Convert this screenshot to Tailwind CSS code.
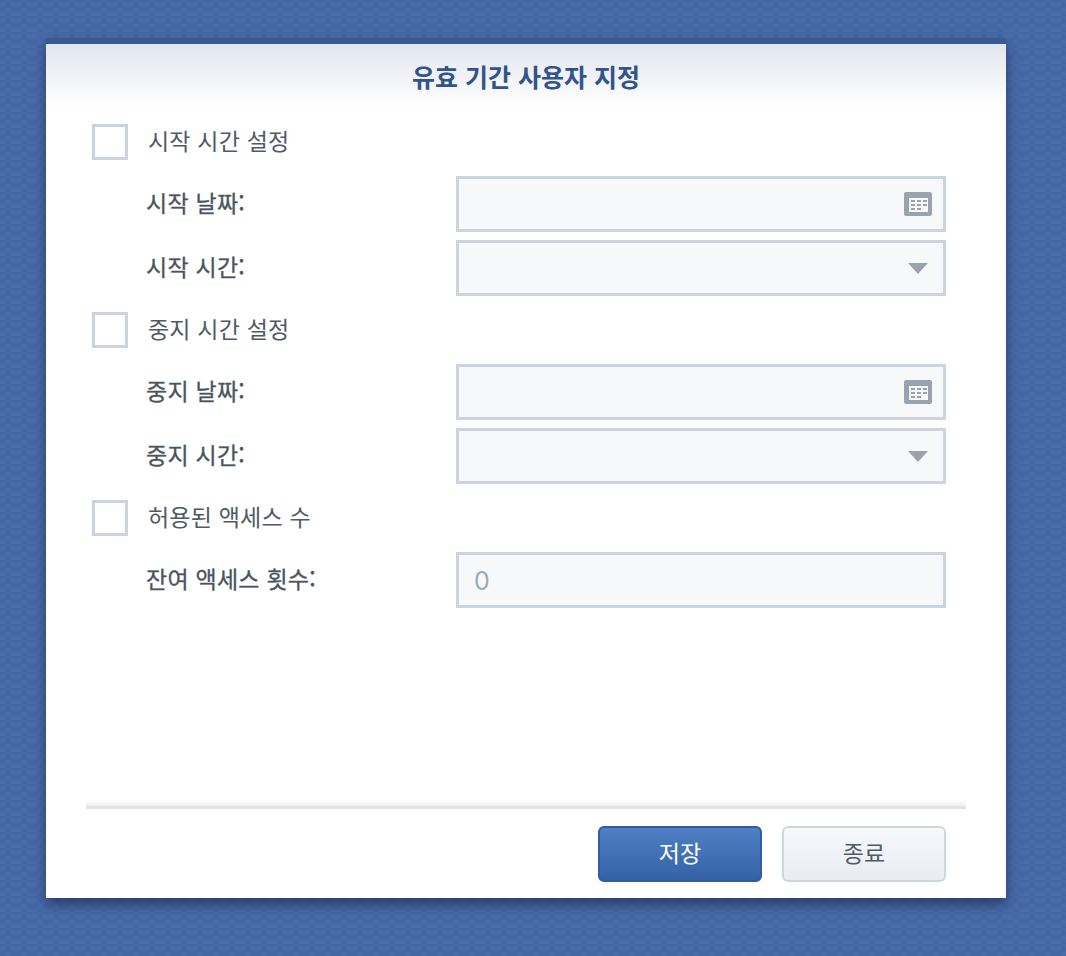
<!DOCTYPE html>
<html lang="ko">
<head>
    <meta charset="UTF-8">
    <title>유효 기간 사용자 지정</title>
    <script src="https://cdn.jsdelivr.net/npm/@tailwindcss/browser@4"></script>
</head>
<body class="h-[956px] overflow-hidden bg-[#4669a8] bg-[length:16px_16px] bg-[image:repeating-linear-gradient(45deg,rgba(255,255,255,0.01)_0_4px,rgba(0,0,0,0.01)_4px_8px),repeating-linear-gradient(-45deg,rgba(255,255,255,0.01)_0_4px,rgba(0,0,0,0.01)_4px_8px)] pt-[38px] pl-[46px] font-['Noto_Sans_CJK_KR','Noto_Sans',sans-serif] text-[23px] text-[#505a64]">

    <!-- Dialog -->
    <div class="flex h-[860px] w-[960px] flex-col border-t-[6px] border-[#395a8e] bg-white shadow-[0_6px_12px_rgba(15,30,60,0.6)]">
        <header class="h-[64px] shrink-0 bg-gradient-to-b from-[#e2e6ee] to-white pt-[14px] text-center text-[25px] leading-[36px] font-bold text-[#32548a]">유효 기간 사용자 지정</header>

        <div class="flex h-[692px] shrink-0 flex-col px-[46px] pt-[16px]">
            <!-- 시작 -->
            <label class="flex h-[36px] items-center">
                <span class="h-[36px] w-[36px] border-[3px] border-[#cbd3de] bg-white"></span>
                <span class="ml-[20px] -translate-y-[2px] leading-[36px] tracking-[0.2px]">시작 시간 설정</span>
            </label>
            <div class="mt-[16px] flex h-[56px] items-center">
                <span class="ml-[54px] w-[310px] -translate-y-[2px] tracking-[0.25px] text-[#4a545e] [-webkit-text-stroke:0.3px]">시작 날짜:</span>
                <div class="flex h-[56px] w-[490px] items-center justify-end border-[3px] border-[#cbd3de] bg-[#f6f8fa] pr-[11px]">
                    <svg width="28" height="24" viewBox="0 0 28 24"><rect width="28" height="24" rx="2" fill="#9aa3ad"/><rect x="5" y="6" width="19" height="14" fill="#f6f8fa"/><path d="M7 9h4M13 9h4M19 9h4M7 13h4M13 13h4M19 13h4M7 17h4M13 17h4" stroke="#9aa3ad" stroke-width="2"/></svg>
                </div>
            </div>
            <div class="mt-[8px] flex h-[56px] items-center">
                <span class="ml-[54px] w-[310px] -translate-y-[2px] tracking-[0.25px] text-[#4a545e] [-webkit-text-stroke:0.3px]">시작 시간:</span>
                <div class="flex h-[56px] w-[490px] items-center justify-end border-[3px] border-[#cbd3de] bg-[#f6f8fa] pr-[15px]">
                    <svg width="20" height="11" viewBox="0 0 20 11"><path d="M0 0h20L10 11z" fill="#9aa3ad"/></svg>
                </div>
            </div>

            <!-- 중지 -->
            <label class="mt-[16px] flex h-[36px] items-center">
                <span class="h-[36px] w-[36px] border-[3px] border-[#cbd3de] bg-white"></span>
                <span class="ml-[20px] -translate-y-[2px] leading-[36px] tracking-[0.2px]">중지 시간 설정</span>
            </label>
            <div class="mt-[16px] flex h-[56px] items-center">
                <span class="ml-[54px] w-[310px] -translate-y-[2px] tracking-[0.25px] text-[#4a545e] [-webkit-text-stroke:0.3px]">중지 날짜:</span>
                <div class="flex h-[56px] w-[490px] items-center justify-end border-[3px] border-[#cbd3de] bg-[#f6f8fa] pr-[11px]">
                    <svg width="28" height="24" viewBox="0 0 28 24"><rect width="28" height="24" rx="2" fill="#9aa3ad"/><rect x="5" y="6" width="19" height="14" fill="#f6f8fa"/><path d="M7 9h4M13 9h4M19 9h4M7 13h4M13 13h4M19 13h4M7 17h4M13 17h4" stroke="#9aa3ad" stroke-width="2"/></svg>
                </div>
            </div>
            <div class="mt-[8px] flex h-[56px] items-center">
                <span class="ml-[54px] w-[310px] -translate-y-[2px] tracking-[0.25px] text-[#4a545e] [-webkit-text-stroke:0.3px]">중지 시간:</span>
                <div class="flex h-[56px] w-[490px] items-center justify-end border-[3px] border-[#cbd3de] bg-[#f6f8fa] pr-[15px]">
                    <svg width="20" height="11" viewBox="0 0 20 11"><path d="M0 0h20L10 11z" fill="#9aa3ad"/></svg>
                </div>
            </div>

            <!-- 액세스 수 -->
            <label class="mt-[16px] flex h-[36px] items-center">
                <span class="h-[36px] w-[36px] border-[3px] border-[#cbd3de] bg-white"></span>
                <span class="ml-[20px] -translate-y-[2px] leading-[36px] tracking-[0.2px]">허용된 액세스 수</span>
            </label>
            <div class="mt-[16px] flex h-[56px] items-center">
                <span class="ml-[54px] w-[310px] -translate-y-[2px] tracking-[0.25px] text-[#4a545e] [-webkit-text-stroke:0.3px]">잔여 액세스 횟수:</span>
                <div class="flex h-[56px] w-[490px] items-center border-[3px] border-[#cbd3de] bg-[#f6f8fa] pt-[3px] pl-[15px] font-['Inter',sans-serif] text-[25px] text-[#a0a8b4]">0</div>
            </div>
        </div>

        <!-- Footer -->
        <div class="mx-[40px] h-[6px] shrink-0 bg-gradient-to-b from-white to-[#efefef]"></div>
        <footer class="mx-[40px] h-[92px] shrink-0 border-t-[3px] border-[#e2e2e2] pt-[17px]">
            <div class="flex justify-end gap-[20px] pr-[20px]">
                <button class="h-[56px] w-[164px] rounded-[6px] border-2 border-[#335e9e] bg-gradient-to-b from-[#4f7fc4] to-[#3562a6] pb-[3px] text-white">저장</button>
                <button class="h-[56px] w-[164px] rounded-[6px] border-2 border-[#cfd6e0] bg-gradient-to-b from-[#f6f8fc] to-[#e9edf3] pb-[3px] text-[#505a64]">종료</button>
            </div>
        </footer>
    </div>
</body>
</html>
